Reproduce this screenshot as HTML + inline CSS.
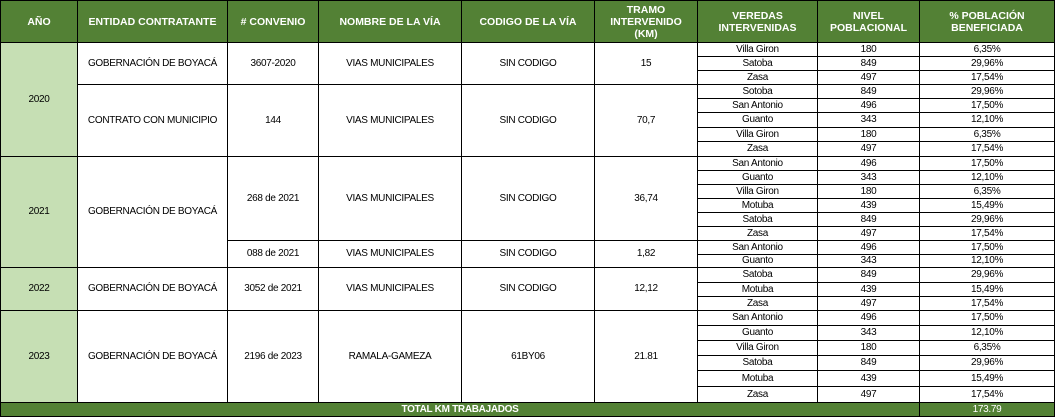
<!DOCTYPE html>
<html><head><meta charset="utf-8"><style>
body{margin:0;background:#fff;width:1056px;height:419px;overflow:hidden}
.g{display:grid;background:#000;gap:1px;padding:1px;width:1053px;
grid-template-columns:76px 149px 90px 142px 132px 102px 119px 101px 134px;
grid-template-rows:41px 13px 13px 13px 13px 13px 14px 13px 14px 13px 13px 13px 13px 13px 13px 13px 12px 14px 13px 13px 14px 14px 14px 14px 15px 15px 13px;
font-family:"Liberation Sans",sans-serif;font-size:10px;color:#000}
.g>div{background:#fff;display:flex;align-items:center;justify-content:center;text-align:center;line-height:12px;white-space:nowrap;overflow:hidden;letter-spacing:-0.3px}
.g>div.h{background:#538135;color:#fff;font-weight:bold;font-size:10.5px;letter-spacing:0}
.g>div.y{background:#c6dfb4}
.g>div.t{background:#538135;color:#fff;font-weight:bold}
</style></head><body><div class="g">
<div class="h">AÑO</div><div class="h">ENTIDAD CONTRATANTE</div><div class="h"># CONVENIO</div><div class="h">NOMBRE DE LA VÍA</div><div class="h">CODIGO DE LA VÍA</div><div class="h">TRAMO<br>INTERVENIDO<br>(KM)</div><div class="h">VEREDAS<br>INTERVENIDAS</div><div class="h">NIVEL<br>POBLACIONAL</div><div class="h">% POBLACIÓN<br>BENEFICIADA</div>

<div class="y" style="grid-column:1;grid-row:2/10">2020</div>
<div style="grid-column:2;grid-row:2/5">GOBERNACIÓN DE BOYACÁ</div>
<div style="grid-column:3;grid-row:2/5">3607-2020</div>
<div style="grid-column:4;grid-row:2/5">VIAS MUNICIPALES</div>
<div style="grid-column:5;grid-row:2/5">SIN CODIGO</div>
<div style="grid-column:6;grid-row:2/5">15</div>
<div style="grid-column:2;grid-row:5/10">CONTRATO CON MUNICIPIO</div>
<div style="grid-column:3;grid-row:5/10">144</div>
<div style="grid-column:4;grid-row:5/10">VIAS MUNICIPALES</div>
<div style="grid-column:5;grid-row:5/10">SIN CODIGO</div>
<div style="grid-column:6;grid-row:5/10">70,7</div>

<div class="y" style="grid-column:1;grid-row:10/18">2021</div>
<div style="grid-column:2;grid-row:10/18">GOBERNACIÓN DE BOYACÁ</div>
<div style="grid-column:3;grid-row:10/16">268 de 2021</div>
<div style="grid-column:4;grid-row:10/16">VIAS MUNICIPALES</div>
<div style="grid-column:5;grid-row:10/16">SIN CODIGO</div>
<div style="grid-column:6;grid-row:10/16">36,74</div>
<div style="grid-column:3;grid-row:16/18">088 de 2021</div>
<div style="grid-column:4;grid-row:16/18">VIAS MUNICIPALES</div>
<div style="grid-column:5;grid-row:16/18">SIN CODIGO</div>
<div style="grid-column:6;grid-row:16/18">1,82</div>

<div class="y" style="grid-column:1;grid-row:18/21">2022</div>
<div style="grid-column:2;grid-row:18/21">GOBERNACIÓN DE BOYACÁ</div>
<div style="grid-column:3;grid-row:18/21">3052 de 2021</div>
<div style="grid-column:4;grid-row:18/21">VIAS MUNICIPALES</div>
<div style="grid-column:5;grid-row:18/21">SIN CODIGO</div>
<div style="grid-column:6;grid-row:18/21">12,12</div>

<div class="y" style="grid-column:1;grid-row:21/27">2023</div>
<div style="grid-column:2;grid-row:21/27">GOBERNACIÓN DE BOYACÁ</div>
<div style="grid-column:3;grid-row:21/27">2196 de 2023</div>
<div style="grid-column:4;grid-row:21/27">RAMALA-GAMEZA</div>
<div style="grid-column:5;grid-row:21/27">61BY06</div>
<div style="grid-column:6;grid-row:21/27">21.81</div>

<div style="grid-column:7;grid-row:2">Villa Giron</div><div style="grid-column:8;grid-row:2">180</div><div style="grid-column:9;grid-row:2">6,35%</div>
<div style="grid-column:7;grid-row:3">Satoba</div><div style="grid-column:8;grid-row:3">849</div><div style="grid-column:9;grid-row:3">29,96%</div>
<div style="grid-column:7;grid-row:4">Zasa</div><div style="grid-column:8;grid-row:4">497</div><div style="grid-column:9;grid-row:4">17,54%</div>
<div style="grid-column:7;grid-row:5">Sotoba</div><div style="grid-column:8;grid-row:5">849</div><div style="grid-column:9;grid-row:5">29,96%</div>
<div style="grid-column:7;grid-row:6">San Antonio</div><div style="grid-column:8;grid-row:6">496</div><div style="grid-column:9;grid-row:6">17,50%</div>
<div style="grid-column:7;grid-row:7">Guanto</div><div style="grid-column:8;grid-row:7">343</div><div style="grid-column:9;grid-row:7">12,10%</div>
<div style="grid-column:7;grid-row:8">Villa Giron</div><div style="grid-column:8;grid-row:8">180</div><div style="grid-column:9;grid-row:8">6,35%</div>
<div style="grid-column:7;grid-row:9">Zasa</div><div style="grid-column:8;grid-row:9">497</div><div style="grid-column:9;grid-row:9">17,54%</div>
<div style="grid-column:7;grid-row:10">San Antonio</div><div style="grid-column:8;grid-row:10">496</div><div style="grid-column:9;grid-row:10">17,50%</div>
<div style="grid-column:7;grid-row:11">Guanto</div><div style="grid-column:8;grid-row:11">343</div><div style="grid-column:9;grid-row:11">12,10%</div>
<div style="grid-column:7;grid-row:12">Villa Giron</div><div style="grid-column:8;grid-row:12">180</div><div style="grid-column:9;grid-row:12">6,35%</div>
<div style="grid-column:7;grid-row:13">Motuba</div><div style="grid-column:8;grid-row:13">439</div><div style="grid-column:9;grid-row:13">15,49%</div>
<div style="grid-column:7;grid-row:14">Satoba</div><div style="grid-column:8;grid-row:14">849</div><div style="grid-column:9;grid-row:14">29,96%</div>
<div style="grid-column:7;grid-row:15">Zasa</div><div style="grid-column:8;grid-row:15">497</div><div style="grid-column:9;grid-row:15">17,54%</div>
<div style="grid-column:7;grid-row:16">San Antonio</div><div style="grid-column:8;grid-row:16">496</div><div style="grid-column:9;grid-row:16">17,50%</div>
<div style="grid-column:7;grid-row:17">Guanto</div><div style="grid-column:8;grid-row:17">343</div><div style="grid-column:9;grid-row:17">12,10%</div>
<div style="grid-column:7;grid-row:18">Satoba</div><div style="grid-column:8;grid-row:18">849</div><div style="grid-column:9;grid-row:18">29,96%</div>
<div style="grid-column:7;grid-row:19">Motuba</div><div style="grid-column:8;grid-row:19">439</div><div style="grid-column:9;grid-row:19">15,49%</div>
<div style="grid-column:7;grid-row:20">Zasa</div><div style="grid-column:8;grid-row:20">497</div><div style="grid-column:9;grid-row:20">17,54%</div>
<div style="grid-column:7;grid-row:21">San Antonio</div><div style="grid-column:8;grid-row:21">496</div><div style="grid-column:9;grid-row:21">17,50%</div>
<div style="grid-column:7;grid-row:22">Guanto</div><div style="grid-column:8;grid-row:22">343</div><div style="grid-column:9;grid-row:22">12,10%</div>
<div style="grid-column:7;grid-row:23">Villa Giron</div><div style="grid-column:8;grid-row:23">180</div><div style="grid-column:9;grid-row:23">6,35%</div>
<div style="grid-column:7;grid-row:24">Satoba</div><div style="grid-column:8;grid-row:24">849</div><div style="grid-column:9;grid-row:24">29,96%</div>
<div style="grid-column:7;grid-row:25">Motuba</div><div style="grid-column:8;grid-row:25">439</div><div style="grid-column:9;grid-row:25">15,49%</div>
<div style="grid-column:7;grid-row:26">Zasa</div><div style="grid-column:8;grid-row:26">497</div><div style="grid-column:9;grid-row:26">17,54%</div>

<div class="t" style="grid-column:1/9;grid-row:27">TOTAL KM TRABAJADOS</div>
<div class="t" style="grid-column:9;grid-row:27;font-weight:normal">173.79</div>
</div></body></html>
